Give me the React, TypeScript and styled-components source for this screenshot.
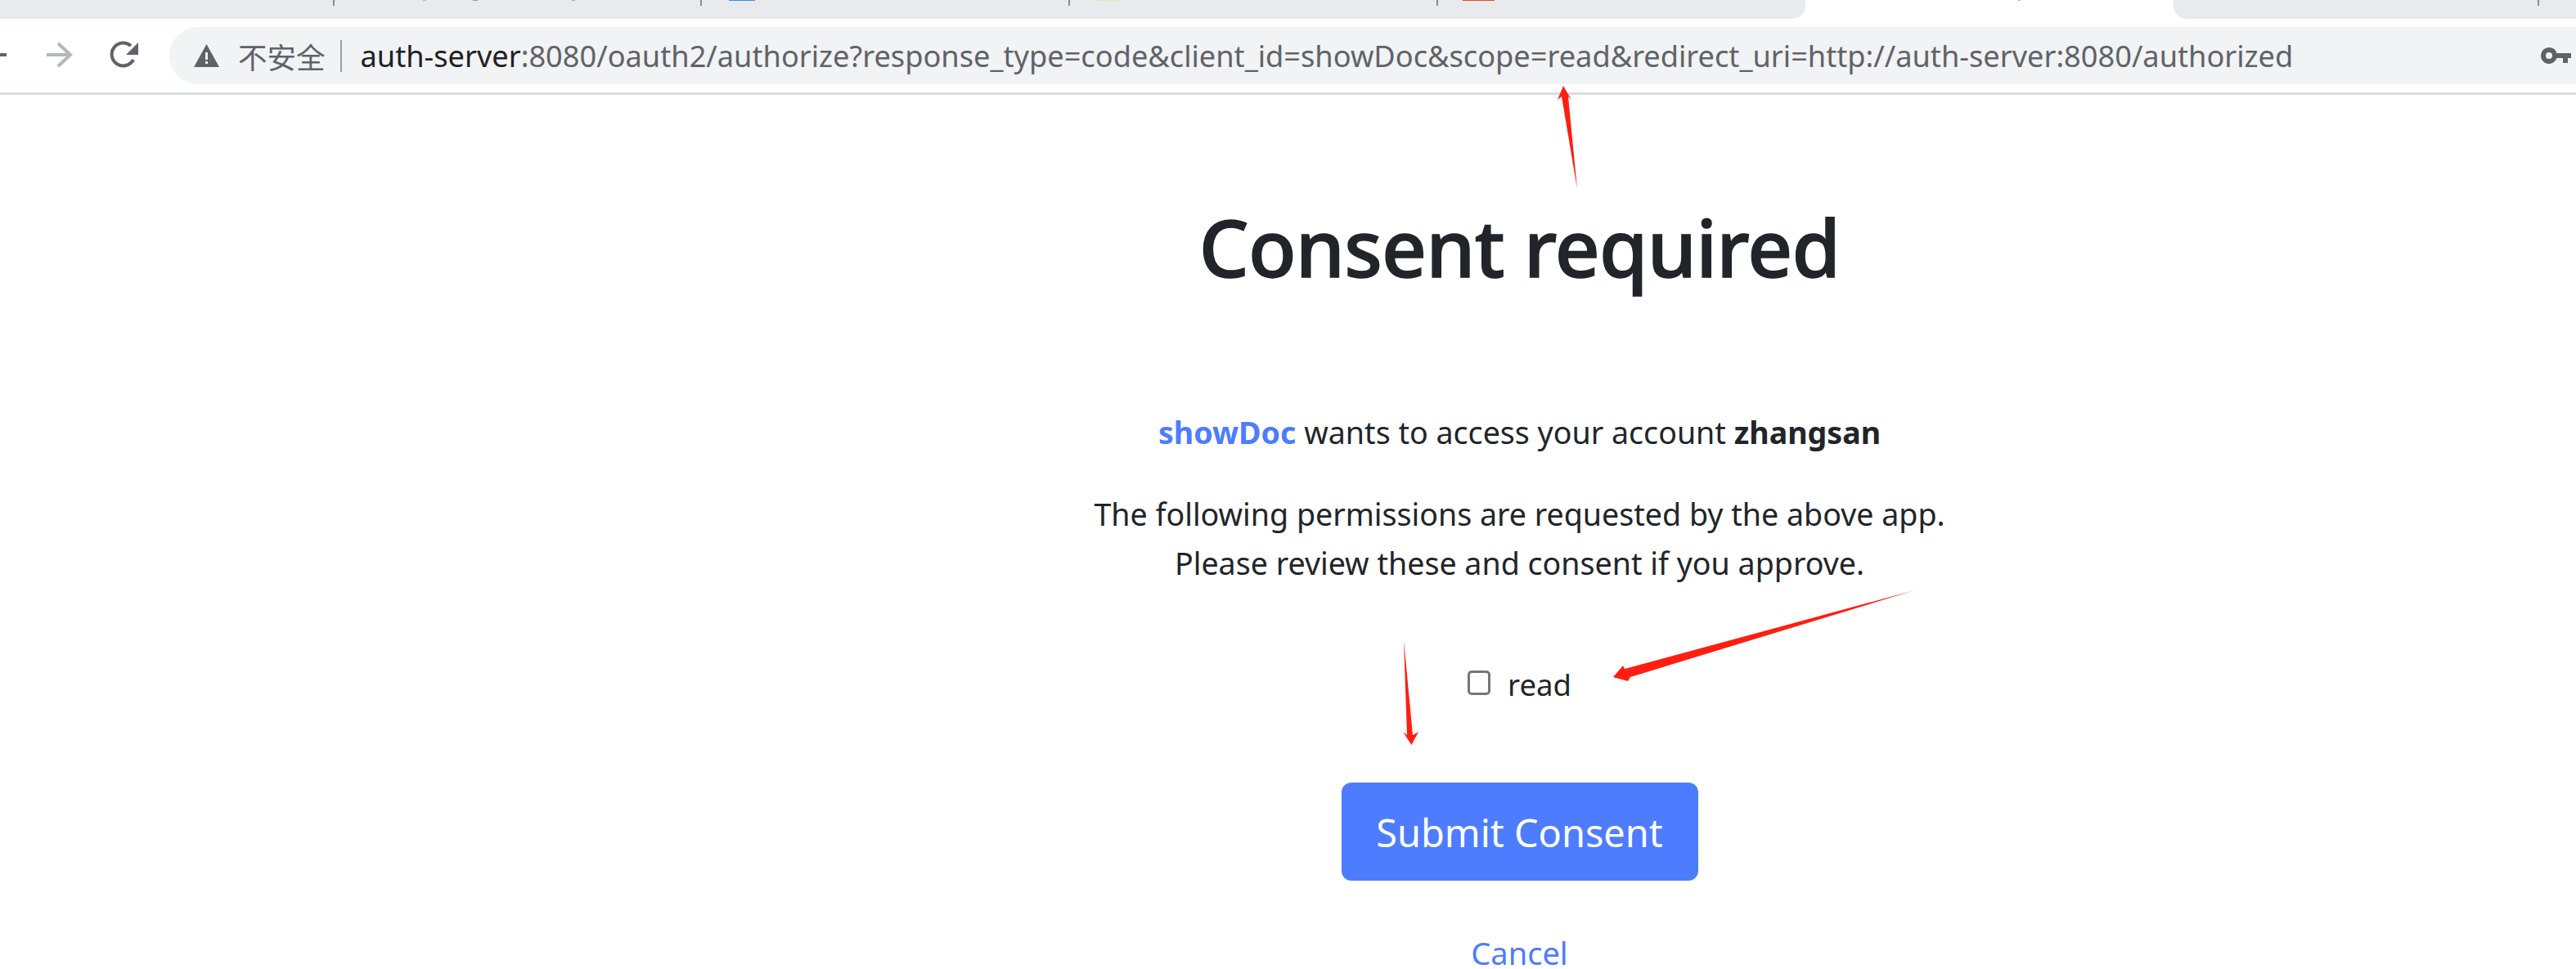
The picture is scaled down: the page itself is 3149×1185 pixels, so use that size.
import React from 'react';
import styled, { createGlobalStyle } from 'styled-components';

const Global = createGlobalStyle`
  html, body {
    margin: 0;
    padding: 0;
    background: #fff;
  }
  body {
    width: 3149px;
    height: 1185px;
    overflow: hidden;
    font-family: "Noto Sans", "Noto Sans CJK SC", sans-serif;
  }
`;

const Page = styled.div`
  position: relative;
  width: 3149px;
  height: 1185px;
  overflow: hidden;
  color: #212529;
`;

const TabStrip = styled.div`
  display: flex;
  height: 23px;
`;

const TabGroup = styled.div<{ $width?: number; $side: 'left' | 'right' }>`
  display: flex;
  flex: ${({ $width }) => ($width ? `0 0 ${$width}px` : '1')};
  background: #e8eaed;
  border-bottom-${({ $side }) => ($side === 'left' ? 'right' : 'left')}-radius: 16px;
`;

const ActiveTab = styled.div`
  display: flex;
  flex: 0 0 450px;
  background: #fff;
`;

const TabSlot = styled.div<{ $width: number }>`
  display: flex;
  align-items: flex-start;
  flex: 0 0 ${({ $width }) => $width}px;
  height: 7px;
  border-right: 2px solid #8e8e90;
  box-sizing: border-box;
`;

const TabMark = styled.div<{ $color: string; $offset: number; $width: number }>`
  flex: none;
  width: ${({ $width }) => $width}px;
  height: 1px;
  margin-left: ${({ $offset }) => $offset}px;
  background: ${({ $color }) => $color};
`;

const Toolbar = styled.div`
  display: flex;
  align-items: center;
  height: 90px;
  border-bottom: 3px solid #dadce0;
`;

const NavIcons = styled.div`
  display: flex;
  align-items: center;
  flex: 0 0 207px;
  height: 100%;
`;

const Omnibox = styled.div`
  display: flex;
  align-items: center;
  flex: 1;
  height: 70px;
  padding: 0 6px 0 30px;
  background: #f1f3f4;
  border-radius: 35px 0 0 35px;
`;

const Insecure = styled.span`
  margin-left: 23px;
  font-size: 35.5px;
  color: #5f6368;
  font-family: "Noto Sans CJK SC", sans-serif;
`;

const Divider = styled.span`
  width: 2px;
  height: 39px;
  margin: 0 23px 0 18px;
  background: #9aa0a6;
`;

const Url = styled.div`
  flex: 1;
  font-size: 36.2px;
  white-space: nowrap;
  color: #5f6368;
`;

const Host = styled.span`
  color: #202124;
`;

const Main = styled.main`
  display: flex;
  flex-direction: column;
  align-items: center;
  padding-left: 566px;
  text-align: center;
`;

const Title = styled.h1`
  margin: 126px 0 0;
  font-size: 96px;
  line-height: 120px;
  font-weight: 500;
  letter-spacing: -0.8px;
  -webkit-text-stroke: 1.4px #212529;
`;

const Intro = styled.p`
  margin: 137px 0 0;
  font-size: 37.6px;
  line-height: 60px;
`;

const AppName = styled.a`
  color: #4d7cfe;
  font-weight: 700;
`;

const Account = styled.b`
  font-weight: 700;
`;

const Notice = styled.p`
  margin: 40px 0 0;
  font-size: 37.6px;
  line-height: 60px;
`;

const ScopeRow = styled.label`
  display: flex;
  align-items: center;
  gap: 21px;
  margin: 88px 0 0;
  font-size: 36.5px;
  line-height: 60px;
`;

const ScopeBox = styled.input`
  appearance: none;
  width: 28px;
  height: 30px;
  margin: -4px 0 0;
  box-sizing: border-box;
  background: #fff;
  border: 3px solid #767676;
  border-radius: 5px;
`;

const SubmitButton = styled.button`
  width: 436px;
  height: 120px;
  margin-top: 90px;
  padding: 2px 0 0;
  font-family: inherit;
  font-size: 46.9px;
  color: #fff;
  background: #4d7cfe;
  border: 0;
  border-radius: 12px;
`;

const CancelLink = styled.a`
  margin-top: 69px;
  font-size: 38px;
  line-height: 38px;
  color: #4d7cfe;
`;

const Annotations = styled.svg`
  position: absolute;
  top: 0;
  left: 0;
  pointer-events: none;
`;

export default function App() {
  return (
    <Page>
      <Global />
      <TabStrip>
        <TabGroup $width={2207} $side="left">
          <TabSlot $width={409} />
          <TabSlot $width={449}>
            <TabMark $color="#b5b5b5" $offset={108} $width={4} />
            <TabMark $color="#9c9c96" $offset={57} $width={6} />
            <TabMark $color="#a8a89c" $offset={115} $width={4} />
          </TabSlot>
          <TabSlot $width={450}>
            <TabMark $color="#4285f4" $offset={33} $width={32} />
          </TabSlot>
          <TabSlot $width={450}>
            <TabMark $color="#dfe6a0" $offset={33} $width={28} />
          </TabSlot>
          <TabMark $color="#e4502c" $offset={30} $width={39} />
        </TabGroup>
        <ActiveTab>
          <TabMark $color="#b9b4cc" $offset={260} $width={3} />
        </ActiveTab>
        <TabGroup $side="right">
          <TabSlot $width={447} />
        </TabGroup>
      </TabStrip>
      <Toolbar>
        <NavIcons>
          <svg width="207" height="90" viewBox="0 0 207 90">
            <path d="M0 44h8" fill="none" stroke="#5f6368" strokeWidth="4" />
            <path d="M57 44h29M71 30l15 14-15 14" fill="none" stroke="#b4b7ba" strokeWidth="4" />
            <path
              d="M163 50a14 14 0 1 1-3-17"
              fill="none"
              stroke="#5f6368"
              strokeWidth="4"
            />
            <path d="M169 29v15h-15z" fill="#5f6368" />
          </svg>
        </NavIcons>
        <Omnibox>
          <svg width="31" height="28" viewBox="0 0 31 28">
            <path fillRule="evenodd" d="M15.5 0 31 28H0zM14 10v9h3v-9zm0 11v3h3v-3z" fill="#5f6368" />
          </svg>
          <Insecure>不安全</Insecure>
          <Divider />
          <Url>
            <Host>auth-server</Host>:8080/oauth2/authorize?response_type=code&amp;client_id=showDoc&amp;scope=read&amp;redirect_uri=http://auth-server:8080/authorized
          </Url>
          <svg width="37" height="20" viewBox="0 0 37 20">
            <path fillRule="evenodd" d="M10 0a10 10 0 0 1 9.5 7H37v6h-4v6h-6v-6h-7.500A10 10 0 1 1 10 0zm0 6a4 4 0 1 0 0 8 4 4 0 0 0 0-8z" fill="#5f6368" />
          </svg>
        </Omnibox>
      </Toolbar>
      <Main>
        <Title>Consent required</Title>
        <Intro>
          <AppName>showDoc</AppName> wants to access your account <Account>zhangsan</Account>
        </Intro>
        <Notice>
          The following permissions are requested by the above app.
          <br />
          Please review these and consent if you approve.
        </Notice>
        <ScopeRow>
          <ScopeBox type="checkbox" />
          read
        </ScopeRow>
        <SubmitButton>Submit Consent</SubmitButton>
        <CancelLink>Cancel</CancelLink>
      </Main>
      <Annotations width="3149" height="1185" viewBox="0 0 3149 1185">
        <path d="M1911 105 1921 122 1917 118 1928 231 1909 118 1904 122z" fill="#ff1e10" />
        <path d="M2340 722 1993 828 1990 833 1972 828 1984 814 1986 818z" fill="#ff1e10" />
        <path d="M1716 783 1727 899 1734 895 1725.500 911 1715 895 1720 899z" fill="#ff1e10" />
      </Annotations>
    </Page>
  );
}
